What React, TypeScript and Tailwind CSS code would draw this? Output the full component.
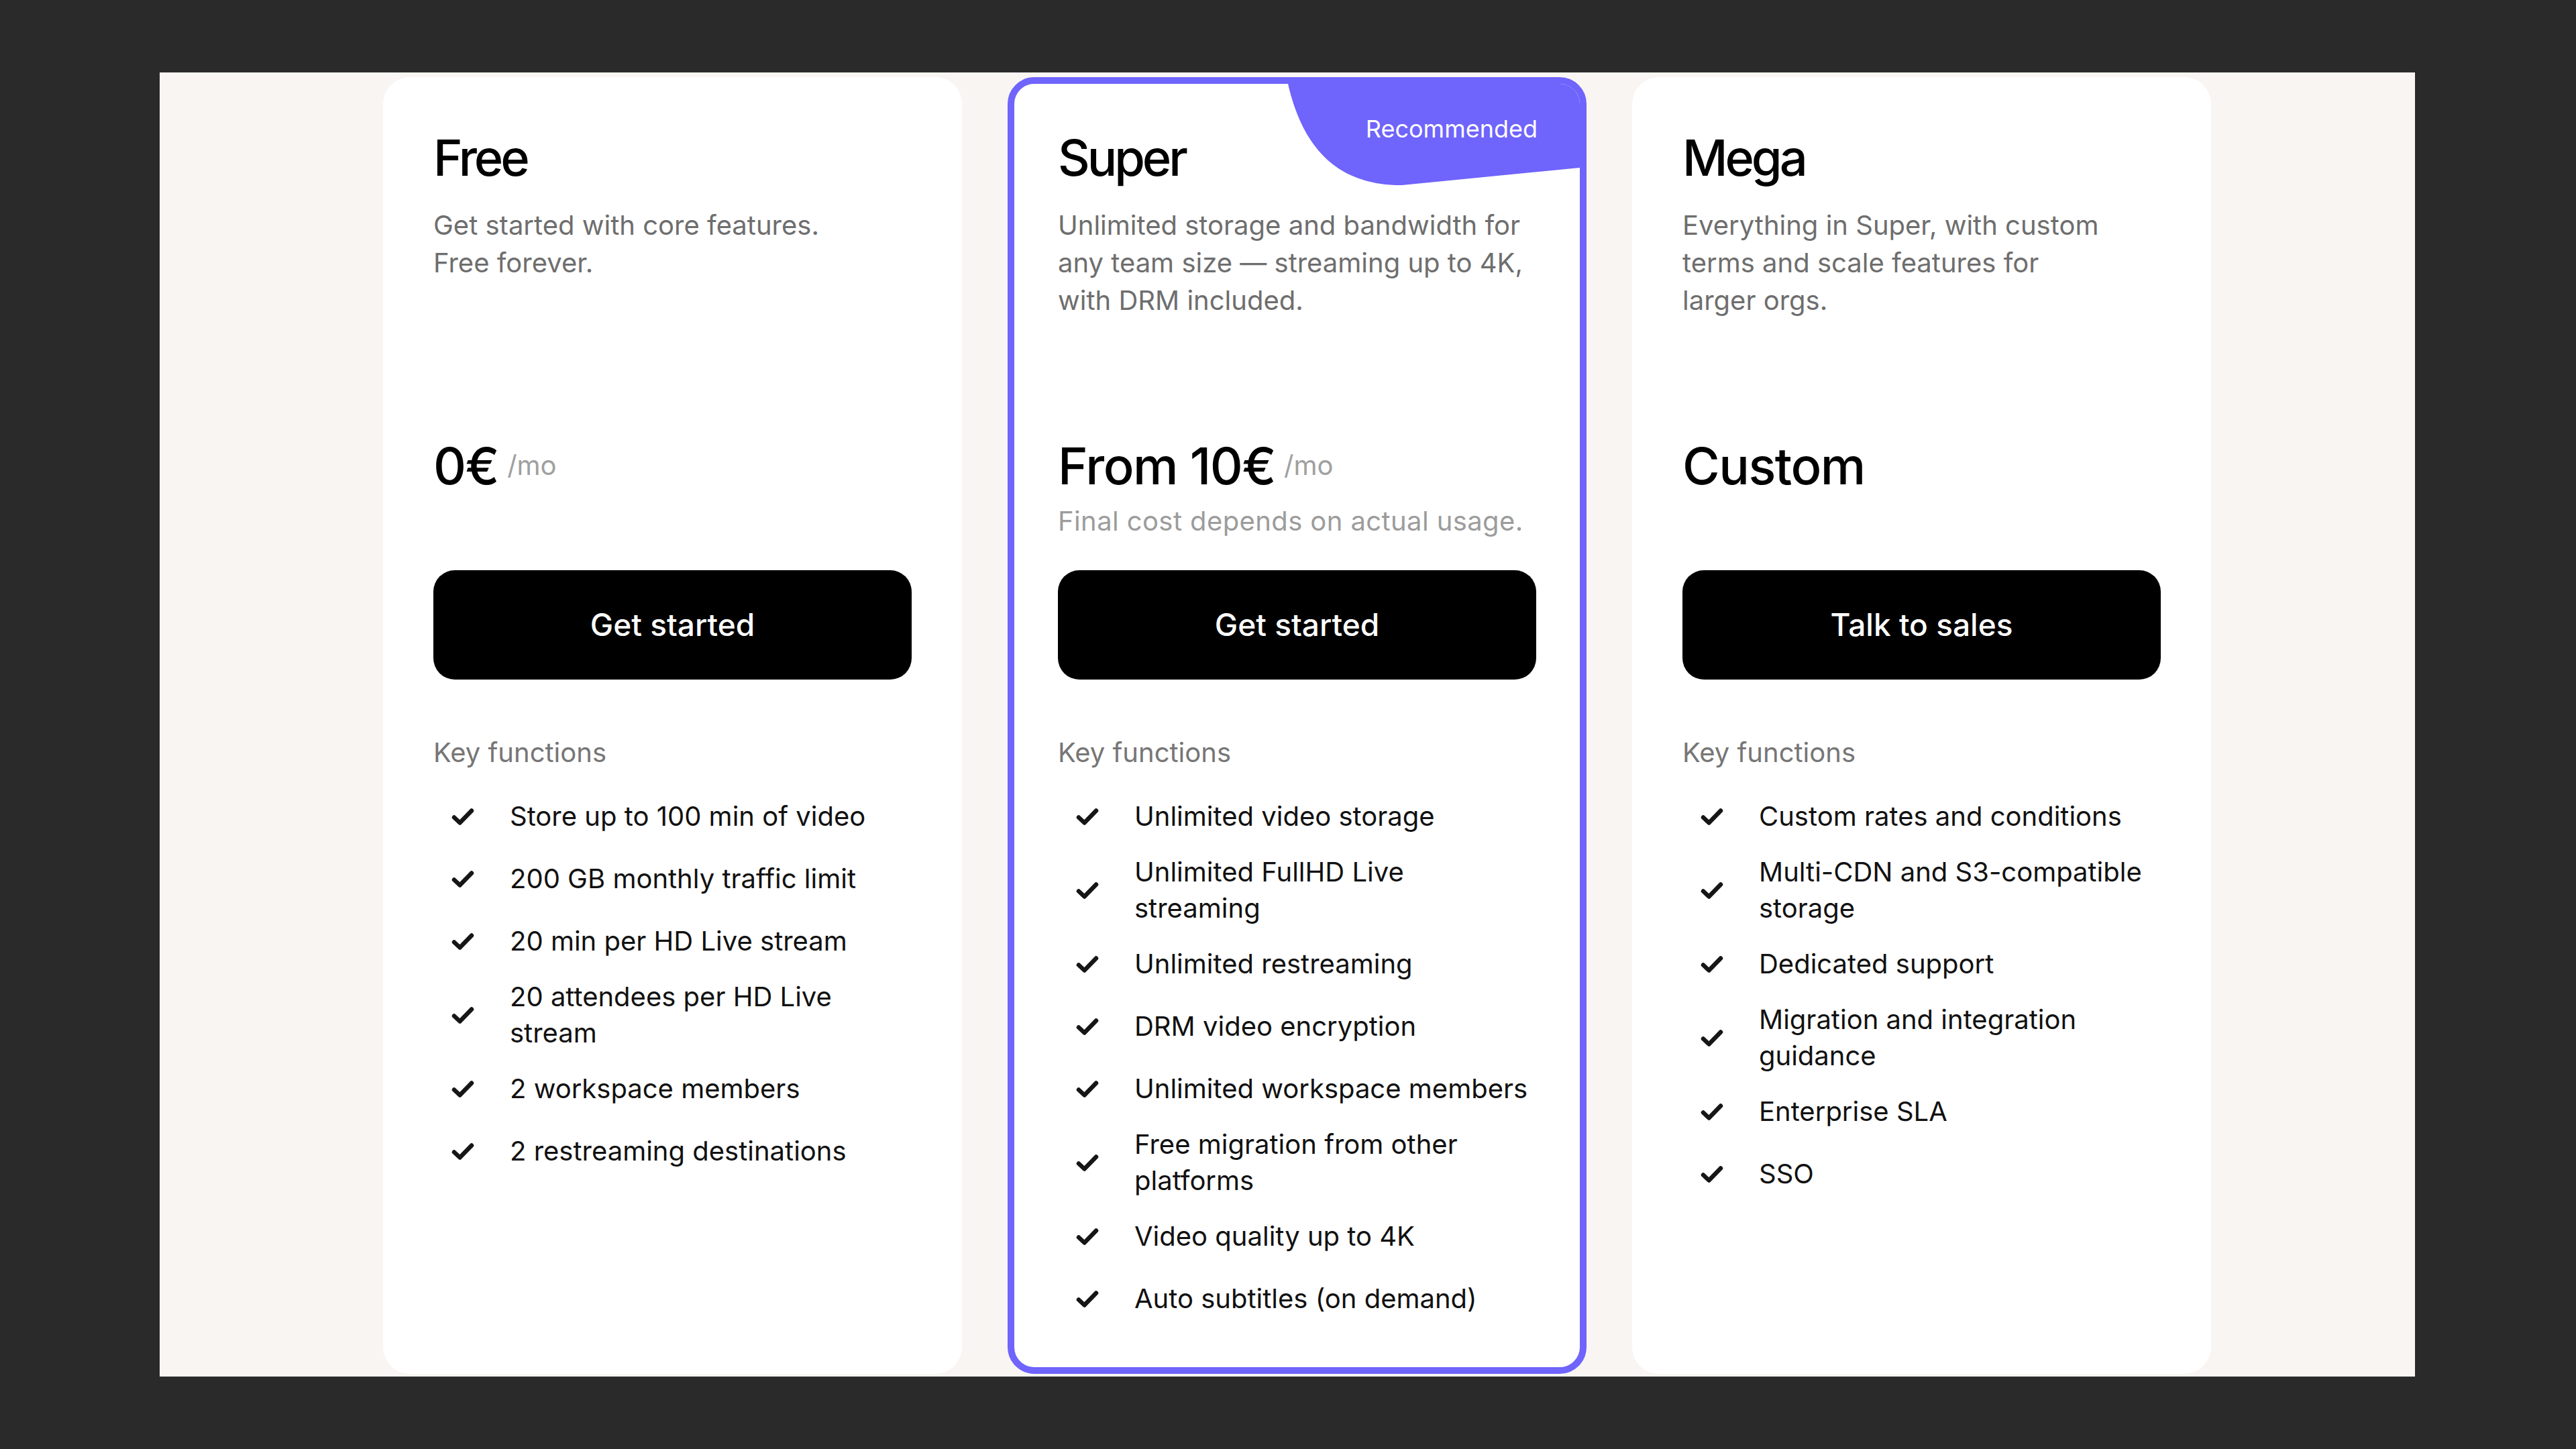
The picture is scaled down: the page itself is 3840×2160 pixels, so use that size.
type Plan = {
  name: string;
  desc: string[];
  price: string;
  perMonth?: boolean;
  note?: string;
  cta: string;
  features: string[][];
  highlighted?: boolean;
};

const plans: Plan[] = [
  {
    name: 'Free',
    desc: ['Get started with core features.', 'Free forever.'],
    price: '0€',
    perMonth: true,
    cta: 'Get started',
    features: [
      ['Store up to 100 min of video'],
      ['200 GB monthly traffic limit'],
      ['20 min per HD Live stream'],
      ['20 attendees per HD Live', 'stream'],
      ['2 workspace members'],
      ['2 restreaming destinations'],
    ],
  },
  {
    name: 'Super',
    desc: [
      'Unlimited storage and bandwidth for',
      'any team size — streaming up to 4K,',
      'with DRM included.',
    ],
    price: 'From 10€',
    perMonth: true,
    note: 'Final cost depends on actual usage.',
    cta: 'Get started',
    highlighted: true,
    features: [
      ['Unlimited video storage'],
      ['Unlimited FullHD Live', 'streaming'],
      ['Unlimited restreaming'],
      ['DRM video encryption'],
      ['Unlimited workspace members'],
      ['Free migration from other', 'platforms'],
      ['Video quality up to 4K'],
      ['Auto subtitles (on demand)'],
    ],
  },
  {
    name: 'Mega',
    desc: ['Everything in Super, with custom', 'terms and scale features for', 'larger orgs.'],
    price: 'Custom',
    cta: 'Talk to sales',
    features: [
      ['Custom rates and conditions'],
      ['Multi-CDN and S3-compatible', 'storage'],
      ['Dedicated support'],
      ['Migration and integration', 'guidance'],
      ['Enterprise SLA'],
      ['SSO'],
    ],
  },
];

function Check() {
  return (
    <svg viewBox="0 0 34 27" className="h-[27px] w-[34px] shrink-0" fill="none">
      <path
        d="M4 14.5 L12.5 22.5 L30 4.5"
        stroke="#161616"
        strokeWidth="6.5"
        strokeLinecap="round"
        strokeLinejoin="round"
      />
    </svg>
  );
}

// 推荐角标：卡片右上角的紫色弧形
function RecommendedBadge() {
  return (
    <div className="absolute right-0 top-0 h-[152px] w-[435px]">
      <svg viewBox="0 0 435 152" className="absolute inset-0 h-full w-full">
        <path d="M0 0 C18 78 60 152 170 151 L435 125 V0 Z" fill="#6f64fc" />
      </svg>
      <span className="absolute right-[63px] top-[49px] text-[36px] leading-none text-white">
        Recommended
      </span>
    </div>
  );
}

function PlanCard({ plan }: { plan: Plan }) {
  const frame = plan.highlighted
    ? 'relative overflow-hidden rounded-[40px] border-[10px] border-[#6f64fc] bg-white px-[65px] pt-[73px]'
    : 'rounded-[40px] bg-white px-[75px] pt-[83px]';

  return (
    <div className={`flex h-[1933px] w-[863px] shrink-0 flex-col ${frame}`}>
      {plan.highlighted && <RecommendedBadge />}

      <h2 className="relative text-[74px] font-medium leading-none tracking-[-0.055em] text-black">
        {plan.name}
      </h2>

      <p className="mt-[36px] h-[348px] text-[40px] leading-[56px] text-[#6e6e6e]">
        {plan.desc.map((line, i) => (
          <span key={i} className="block whitespace-nowrap">
            {line}
          </span>
        ))}
      </p>

      <div className="flex h-[194px] flex-col">
        <div className="flex items-center gap-[13px]">
          <span className="text-[76px] font-medium leading-none tracking-[-0.02em] text-black">
            {plan.price}
          </span>
          {plan.perMonth && <span className="text-[40px] leading-none text-[#a0a0a0]">/mo</span>}
        </div>
        {plan.note && (
          <p className="mt-[17px] text-[40px] leading-[56px] tracking-[0.01em] text-[#9c9c9c]">
            {plan.note}
          </p>
        )}
      </div>

      <button className="flex h-[163px] w-full items-center justify-center rounded-[32px] bg-black text-[46px] font-medium text-white">
        {plan.cta}
      </button>

      <div className="mt-[81px] text-[40px] leading-[56px] text-[#767676]">Key functions</div>

      <ul className="mt-[30px] flex flex-col gap-[19px]">
        {plan.features.map((lines, i) => (
          <li key={i} className="flex min-h-[74px] items-center gap-[53px] pl-[27px]">
            <Check />
            <span className="text-[40px] leading-[54px] text-[#111111]">
              {lines.map((l, j) => (
                <span key={j} className="block whitespace-nowrap">
                  {l}
                </span>
              ))}
            </span>
          </li>
        ))}
      </ul>
    </div>
  );
}

export default function App() {
  return (
    <div className="h-[2160px] w-[3840px] bg-[#2a2a2a] pl-[238px] pt-[108px] font-[Inter,'Noto_Sans',sans-serif]">
      <div className="flex h-[1944px] w-[3362px] gap-[68px] bg-[#f9f5f2] pl-[333px] pt-[7px]">
        {plans.map((p) => (
          <PlanCard key={p.name} plan={p} />
        ))}
      </div>
    </div>
  );
}
